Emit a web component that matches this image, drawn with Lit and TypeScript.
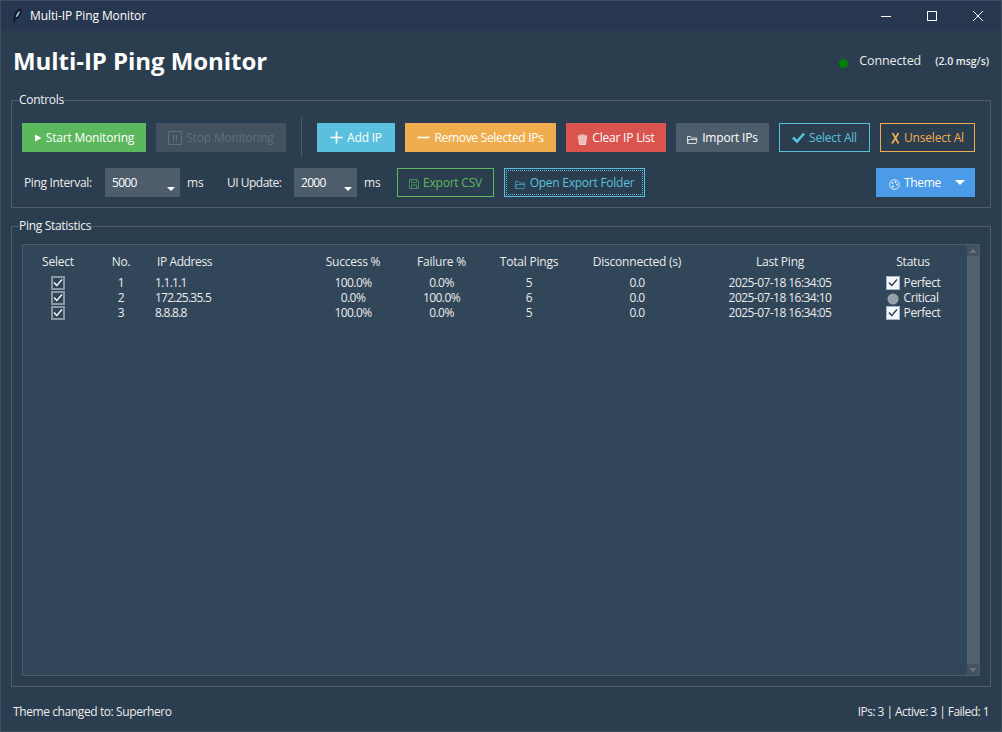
import { LitElement, html, css, svg } from 'lit';
import { customElement } from 'lit/decorators.js';

const rows = [
  { no: 1, ip: '1.1.1.1', ok: '100.0%', fail: '0.0%', total: 5, disc: '0.0', last: '2025-07-18 16:34:05', status: 'Perfect' },
  { no: 2, ip: '172.25.35.5', ok: '0.0%', fail: '100.0%', total: 6, disc: '0.0', last: '2025-07-18 16:34:10', status: 'Critical' },
  { no: 3, ip: '8.8.8.8', ok: '100.0%', fail: '0.0%', total: 5, disc: '0.0', last: '2025-07-18 16:34:05', status: 'Perfect' },
];

const icon = (w: number, h: number, body: unknown, cls = '') => html`<svg class="ico ${cls}" width=${w} height=${h} viewBox="0 0 ${w} ${h}" fill="none">${body}</svg>`;

const icons = {
  feather: icon(9, 16, svg`<path d="M8 1C5 2 2 5 1.5 9L1 15M8 1C8 5 6 10 2 11" stroke="#0c1420" stroke-width="1.4"/><path d="M7 2.5C5 4 3 7 2.8 9.6C5 8.5 6.8 5.5 7 2.5Z" fill="#9ec4ea"/>`),
  play: icon(8, 8, svg`<path d="M1 .5L7.5 4L1 7.5Z" fill="#fff"/>`),
  pause: icon(14, 14, svg`<rect x=".5" y=".5" width="13" height="13" stroke="#5f6e7c"/><path d="M5.5 4v6M8.5 4v6" stroke="#5f6e7c" stroke-width="1.2"/>`),
  plus: icon(13, 13, svg`<path d="M6.5 .5v12M.5 6.5h12" stroke="#fff" stroke-width="1.6"/>`),
  minus: icon(13, 13, svg`<path d="M.5 6.5h12" stroke="#fff" stroke-width="1.6"/>`),
  trash: icon(11, 11, svg`<path d="M.5 2h10M1.5 3l1 7.5h6l1-7.5Z" stroke="#f6d5d3" fill="#f0bcb9"/><path d="M3 1h5" stroke="#f6d5d3"/>`, 'low'),
  folder: icon(11, 9, svg`<path d="M.5 8.5V1.5h3l1 1.5h5v1.500M.5 8.500h8.500l1-4h-8.500Z" stroke="#d5dae0"/>`, 'low'),
  folderBlue: icon(11, 9, svg`<path d="M.5 8.5V1.5h3l1 1.5h5v1.500M.5 8.500h8.500l1-4h-8.500Z" stroke="#3f8fb0"/>`, 'low'),
  check: icon(13, 11, svg`<path d="M1 5.5L5 9.5L12 1.5" stroke="#5bc0de" stroke-width="2.6"/>`),
  cross: icon(9, 12, svg`<path d="M1.5 1C3.5 4 5.5 8 7.5 11.5M7.5 1C5.5 4 3.5 8 1 11.5" stroke="#f0ad4e" stroke-width="1.7"/>`),
  save: icon(10, 10, svg`<path d="M.5 .5h7.500l1.500 1.500v7.500h-9Z" stroke="#3f8f55"/><path d="M2.500 .5v3h5v-3M2.500 9.500v-3.500h5v3.500" stroke="#3f8f55"/>`, 'low'),
  palette: icon(11, 11, svg`<circle cx="5.500" cy="5.500" r="4.800" stroke="#e8f1fb"/><circle cx="3.500" cy="4" r=".9" fill="#e8f1fb"/><circle cx="6.500" cy="3" r=".9" fill="#e8f1fb"/><circle cx="8" cy="5.500" r=".9" fill="#e8f1fb"/><circle cx="4" cy="7.500" r="1" fill="#e8f1fb"/>`, 'low'),
  tick: (color: string) => icon(10, 9, svg`<path d="M1 4.500L3.800 7.500L9 1.500" stroke=${color} stroke-width="1.300"/>`),
  hatched: icon(12, 12, svg`<circle cx="6" cy="6" r="5.500" fill="#9aa3ad"/><path d="M2 8L8 2M4 10L10 4" stroke="#868f9a"/>`, 'low'),
};

@customElement('app-root')
export class AppRoot extends LitElement {
  static styles = css`
    :host {
      display: block;
      width: 1002px;
      height: 732px;
      font-family: 'Open Sans', 'Noto Sans', sans-serif;
      font-size: 12px;
      letter-spacing: -0.2px;
      color: #ebebeb;
    }

    .window {
      box-sizing: border-box;
      width: 100%;
      height: 100%;
      display: flex;
      flex-direction: column;
      background: #2b3e50;
      border: 1px solid #3c4d5f;
    }

    .ico { flex: none; display: block; }
    .low { margin-top: 3px; }

    .titlebar {
      height: 30px;
      flex: none;
      display: flex;
      align-items: center;
      background: #27374f;
      padding-left: 12px;
      color: #fff;
    }
    .titlebar .name { margin: 0 0 1px 8px; letter-spacing: -0.1px; }
    .win-btns { margin-left: auto; display: flex; }
    .win-btn {
      width: 46px;
      height: 30px;
      display: flex;
      align-items: center;
      justify-content: center;
    }

    .content {
      flex: 1;
      min-height: 0;
      display: flex;
      flex-direction: column;
      padding: 0 10px;
    }

    .header {
      height: 61px;
      flex: none;
      display: flex;
      align-items: center;
    }
    h1 {
      margin: 0 0 2px 2px;
      font-size: 24px;
      font-weight: 700;
      letter-spacing: -0.05px;
      color: #fff;
    }
    .conn { margin: 0 0 2px auto; display: flex; align-items: center; padding-right: 2px; }
    .dot {
      width: 9px;
      height: 9px;
      border-radius: 50%;
      background: #008000;
      margin: 6px 11px 0 0;
    }
    .online { font-size: 12.5px; letter-spacing: -0.12px; }
    .rate { font-size: 10.5px; font-weight: 600; margin-left: 14px; letter-spacing: -0.05px; }

    fieldset {
      margin: 0;
      min-width: 0;
      border: 1px solid #4e5d6c;
    }
    legend {
      margin-left: -3px;
      padding: 0;
      line-height: 16px;
      letter-spacing: -0.3px;
      color: #f2f2f2;
    }

    .controls {
      flex: none;
      padding: 15px 15px 10px 10px;
    }
    .row { display: flex; height: 29px; }
    .row + .row { margin-top: 16px; align-items: center; }
    .row.gap { gap: 10px; }
    .sep {
      width: 1px;
      background: #4e5d6c;
      margin: -5px 5px;
    }

    .btn {
      box-sizing: border-box;
      height: 29px;
      flex: none;
      display: flex;
      align-items: center;
      justify-content: center;
      gap: 4px;
      color: #fff;
    }
    .solid-green { background: #5cb85c; }
    .disabled { background: #44515f; color: #5f6e7c; }
    .solid-blue { background: #5bc0de; }
    .solid-orange { background: #f0ad4e; letter-spacing: -0.3px; }
    .solid-red { background: #d9534f; }
    .solid-grey { background: #4e5d6c; }
    .outline-blue { border: 1px solid #5bc0de; color: #5bc0de; }
    .outline-orange { border: 1px solid #f0ad4e; color: #f0ad4e; }
    .outline-green { border: 1px solid #5cb85c; color: #5cb85c; }
    .focused { position: relative; }
    .focused::after {
      content: '';
      position: absolute;
      inset: 1px;
      border: 1px dotted #5bc0de;
    }

    .w-start { width: 124px; }
    .w-stop { width: 130px; }
    .w-add { width: 78px; }
    .w-remove { width: 151px; }
    .w-clear { width: 100px; }
    .w-import { width: 93px; }
    .w-select { width: 91px; }
    .w-unselect { width: 95px; }
    .w-export { width: 97px; }
    .w-open { width: 141px; margin-left: 10px; letter-spacing: -0.25px; }

    .theme {
      width: 99px;
      margin-left: auto;
      background: #4c9be8;
      justify-content: flex-start;
      padding-left: 13px;
      letter-spacing: -0.3px;
    }
    .caret {
      width: 0;
      height: 0;
      border-left: 5px solid transparent;
      border-right: 5px solid transparent;
      border-top: 5px solid #fff;
      margin-left: auto;
      margin-right: 10px;
    }

    .lbl-ping { width: 81px; padding-left: 2px; letter-spacing: -0.35px; }
    .lbl-ui { width: 67px; letter-spacing: -0.5px; }
    .ms { margin-left: 7px; }
    .ms-a { width: 40px; }
    .ms-b { width: 33px; }
    .spin {
      box-sizing: border-box;
      height: 29px;
      flex: none;
      display: flex;
      align-items: center;
      background: #4e5d6c;
      padding-left: 7px;
      color: #fff;
      letter-spacing: -0.7px;
      position: relative;
    }
    .spin::after {
      content: '';
      position: absolute;
      right: 5px;
      bottom: 6px;
      border-left: 4px solid transparent;
      border-right: 4px solid transparent;
      border-top: 4px solid #fff;
    }
    .spin-a { width: 75px; }
    .spin-b { width: 63px; }

    .stats {
      flex: 1;
      min-height: 0;
      margin-top: 10px;
      padding: 10px;
      display: flex;
      flex-direction: column;
    }
    .tree {
      height: 432px;
      box-sizing: border-box;
      display: flex;
      background: #32465a;
      border: 1px solid #4e5d6c;
    }
    .table { flex: 1; }
    .grid-row {
      display: grid;
      grid-template-columns: 70px 56px 159px 90px 87px 88px 128px 158px 1fr;
      text-align: center;
      line-height: 15px;
      height: 15px;
      align-items: center;
      letter-spacing: -0.55px;
    }
    .grid-row.head { height: 30px; padding-top: 2px; box-sizing: border-box; letter-spacing: -0.22px; }
    .left { text-align: left; padding-left: 6px; letter-spacing: -0.75px; }
    .head .left { padding-left: 8px; letter-spacing: -0.4px; }
    .cell-center { display: flex; justify-content: center; align-items: center; gap: 4px; letter-spacing: -0.4px; }
    .cb {
      width: 14px;
      height: 14px;
      box-sizing: border-box;
      display: flex;
      align-items: center;
      justify-content: center;
    }
    .cb-select { border: 2px solid #8a96a2; background: #32465a; }
    .cb-status { background: #f4f6f8; border: 1px solid #9fb6cc; }

    .scrollbar {
      width: 12px;
      flex: none;
      display: flex;
      flex-direction: column;
      justify-content: space-between;
      background: #536271;
    }
    .arrow {
      height: 11px;
      background: #43525f;
      display: flex;
      align-items: center;
      justify-content: center;
    }
    .up { width: 0; height: 0; border: 4px solid transparent; border-top: 0; border-bottom: 4px solid #66737f; }
    .down { width: 0; height: 0; border: 4px solid transparent; border-bottom: 0; border-top: 4px solid #66737f; }

    .status {
      height: 44px;
      flex: none;
      display: flex;
      align-items: center;
      justify-content: space-between;
      padding: 5px 2px 0 2px;
      box-sizing: border-box;
      color: #ebebeb;
      letter-spacing: -0.4px;
    }
    .status .counts { letter-spacing: -0.55px; }
  `;

  render() {
    return html`
      <div class="window">
        <div class="titlebar">
          ${icons.feather}
          <span class="name">Multi-IP Ping Monitor</span>
          <div class="win-btns">
            <div class="win-btn">${icon(10, 10, svg`<path d="M0 5.500h10" stroke="#fff"/>`)}</div>
            <div class="win-btn">${icon(10, 10, svg`<rect x=".5" y=".5" width="9" height="9" stroke="#fff"/>`)}</div>
            <div class="win-btn">${icon(10, 10, svg`<path d="M0 0L10 10M10 0L0 10" stroke="#fff"/>`)}</div>
          </div>
        </div>
        <div class="content">
          <div class="header">
            <h1>Multi-IP Ping Monitor</h1>
            <div class="conn">
              <span class="dot"></span>
              <span class="online">Connected</span>
              <span class="rate">(2.0 msg/s)</span>
            </div>
          </div>

          <fieldset class="controls">
            <legend>Controls</legend>
            <div class="row gap">
              <div class="btn w-start solid-green">${icons.play}Start Monitoring</div>
              <div class="btn w-stop disabled">${icons.pause}Stop Monitoring</div>
              <div class="sep"></div>
              <div class="btn w-add solid-blue">${icons.plus}Add IP</div>
              <div class="btn w-remove solid-orange">${icons.minus}Remove Selected IPs</div>
              <div class="btn w-clear solid-red">${icons.trash}Clear IP List</div>
              <div class="btn w-import solid-grey">${icons.folder}Import IPs</div>
              <div class="btn w-select outline-blue">${icons.check}Select All</div>
              <div class="btn w-unselect outline-orange">${icons.cross}Unselect Al</div>
            </div>
            <div class="row">
              <span class="lbl-ping">Ping Interval:</span>
              <div class="spin spin-a">5000</div>
              <span class="ms ms-a">ms</span>
              <span class="lbl-ui">UI Update:</span>
              <div class="spin spin-b">2000</div>
              <span class="ms ms-b">ms</span>
              <div class="btn w-export outline-green">${icons.save}Export CSV</div>
              <div class="btn w-open outline-blue focused">${icons.folderBlue}Open Export Folder</div>
              <div class="btn theme">${icons.palette}Theme<span class="caret"></span></div>
            </div>
          </fieldset>

          <fieldset class="stats">
            <legend>Ping Statistics</legend>
            <div class="tree">
              <div class="table">
                <div class="grid-row head">
                  <span>Select</span><span>No.</span><span class="left">IP Address</span>
                  <span>Success %</span><span>Failure %</span><span>Total Pings</span>
                  <span>Disconnected (s)</span><span>Last Ping</span><span>Status</span>
                </div>
                ${rows.map((r) => html`
                  <div class="grid-row">
                    <span class="cell-center"><span class="cb cb-select">${icons.tick('#fff')}</span></span>
                    <span>${r.no}</span>
                    <span class="left">${r.ip}</span>
                    <span>${r.ok}</span>
                    <span>${r.fail}</span>
                    <span>${r.total}</span>
                    <span>${r.disc}</span>
                    <span>${r.last}</span>
                    <span class="cell-center">
                      ${r.status === 'Perfect'
                        ? html`<span class="cb cb-status">${icons.tick('#27374f')}</span>`
                        : icons.hatched}
                      ${r.status}
                    </span>
                  </div>
                `)}
              </div>
              <div class="scrollbar">
                <div class="arrow"><span class="up"></span></div>
                <div class="arrow"><span class="down"></span></div>
              </div>
            </div>
          </fieldset>

          <div class="status">
            <span>Theme changed to: Superhero</span>
            <span class="counts">IPs: 3 | Active: 3 | Failed: 1</span>
          </div>
        </div>
      </div>
    `;
  }
}
